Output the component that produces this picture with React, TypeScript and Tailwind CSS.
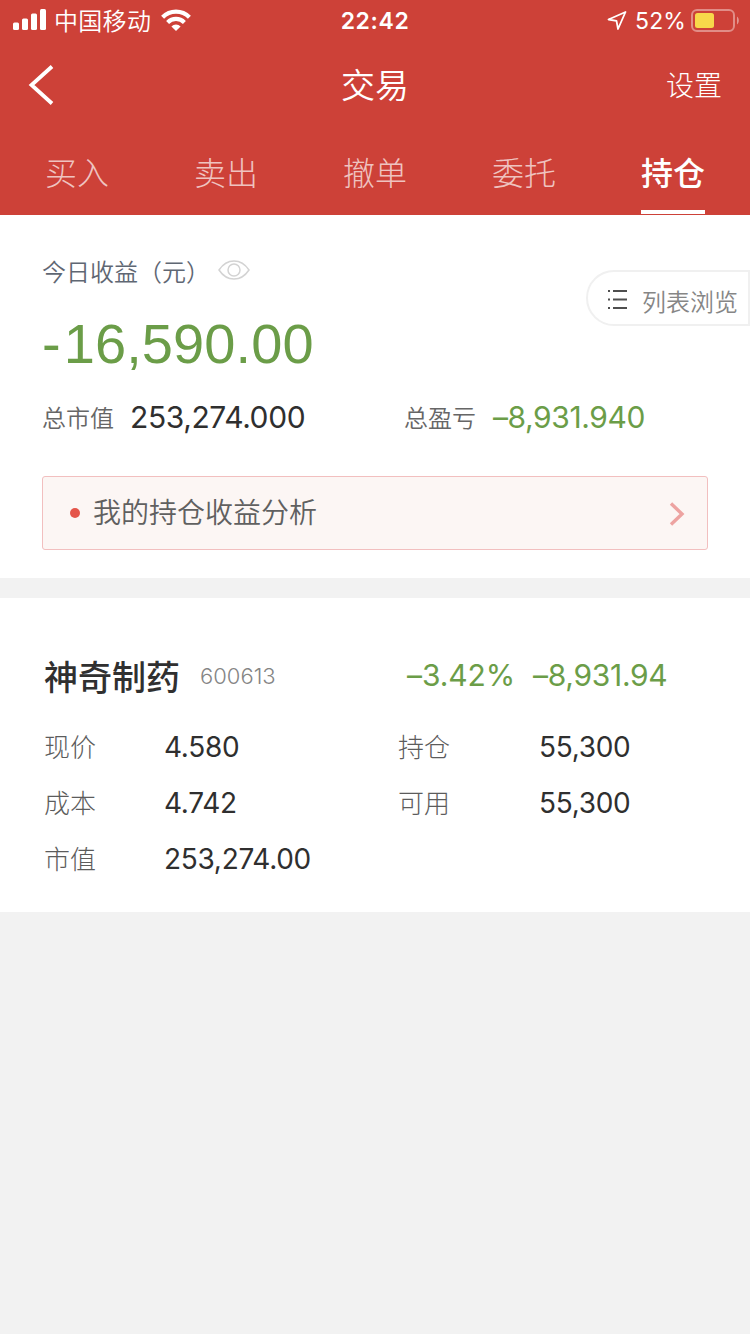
import React from 'react';
import clsx from 'clsx';

const tabs = ['买入', '卖出', '撤单', '委托', '持仓'];
const activeTab = '持仓';

const position = {
    name: '神奇制药',
    code: '600613',
    rate: '–3.42%',
    profit: '–8,931.94',
    rows: [
        ['现价', '4.580', '持仓', '55,300'],
        ['成本', '4.742', '可用', '55,300'],
        ['市值', '253,274.00', '', ''],
    ],
};

const StatusBar: React.FC = () => (
    <div className="h-10 grid grid-cols-3 items-center text-white leading-none">
        <div className="flex items-center pl-[13px]">
            <svg className="w-[33px] h-[22px]" viewBox="0 0 33 22" fill="currentColor">
                <rect x="0" y="13.5" width="6" height="7.5" rx="1.5" />
                <rect x="9" y="9.5" width="6" height="11.5" rx="1.5" />
                <rect x="18" y="4.5" width="6" height="16.5" rx="1.5" />
                <rect x="27" y="0" width="6" height="21" rx="1.5" />
            </svg>
            <span className="ml-2 pt-[3px] text-[24px] font-[350] tracking-[0.3px]">中国移动</span>
            <svg className="ml-[10px] w-[30px] h-[22px]" viewBox="0 0 30 22" fill="none" stroke="currentColor" strokeWidth="4.2">
                <path d="M1.6 8.2a19 19 0 0 1 26.8 0" />
                <path d="M6.6 13.4a12 12 0 0 1 16.8 0" />
                <path d="M10.4 17.4a6.6 6.6 0 0 1 9.2 0L15 22z" fill="currentColor" stroke="none" />
            </svg>
        </div>
        <div className="pt-[2px] text-center text-[23px] font-semibold tracking-[0.6px]">22:42</div>
        <div className="flex items-center justify-end pr-[11px]">
            <svg className="w-5 h-5" viewBox="0 0 20 20" fill="none" stroke="currentColor" strokeWidth="1.8" strokeLinejoin="round">
                <path d="M18.5 2L1.5 9.5l8 1.3 1.5 8.200z" />
            </svg>
            <span className="ml-2 pt-[2px] text-[23px] tracking-[0.1px]">52%</span>
            <svg className="ml-[5px] w-[48px] h-[23px]" viewBox="0 0 48 23" fill="none">
                <rect x="1" y="1" width="42" height="21" rx="5" stroke="#fff" strokeOpacity=".4" strokeWidth="2" />
                <path d="M46 7.5c2.4 1.6 2.4 6.4 0 8z" fill="#fff" fillOpacity=".45" />
                <rect x="4" y="4" width="19" height="15" rx="2.5" fill="#f8d84a" />
            </svg>
        </div>
    </div>
);

const Header: React.FC = () => (
    <header className="h-[215px] bg-[#cd4138] flex flex-col text-white">
        <StatusBar />
        <div className="h-[90px] grid grid-cols-3 items-center px-7 leading-none">
            <svg className="w-[26px] h-[40px]" viewBox="0 0 26 40" fill="none" stroke="currentColor" strokeWidth="3.8">
                <path d="M24 1.500L3.500 20l20.500 18.500" />
            </svg>
            <h1 className="pt-[2px] text-center text-[34px] font-[350]">交易</h1>
            <span className="pt-[2px] text-right text-[28px] font-light">设置</span>
        </div>
        <nav className="flex-1 flex px-[2.5px]">
            {tabs.map((tab) => (
                <div key={tab} className="flex-1 flex flex-col items-center pb-px">
                    <span
                        className={clsx(
                            'flex-1 flex items-center pt-[7px] text-[32px] leading-none',
                            tab === activeTab ? 'font-medium' : 'font-light text-white/70'
                        )}
                    >
                        {tab}
                    </span>
                    <span className={clsx('w-16 h-1', tab === activeTab && 'bg-white')} />
                </div>
            ))}
        </nav>
    </header>
);

const Summary: React.FC = () => (
    <section className="relative bg-white pt-7 pb-7 px-[42px]">
        <div className="h-14 flex items-center">
            <span className="pt-[3px] text-[24px] leading-none font-[350] text-[#5f6773]">今日收益（元）</span>
            <svg className="mb-0.5 ml-2 w-8 h-5" viewBox="0 0 32 20" fill="none" stroke="#d3d3d3" strokeWidth="1.5">
                <path d="M1 10C9-2 23-2 31 10C23 22 9 22 1 10z" />
                <circle cx="16" cy="10" r="6" />
            </svg>
        </div>
        <div className="h-[90px] flex items-center text-[56px] leading-none text-[#6b9d48] font-['Liberation_Sans',sans-serif]">
            <span className="tracking-[3px]">-</span>
            <span className="tracking-[0.1px]">16,590.00</span>
        </div>
        <div className="h-[58px] flex items-center leading-none">
            <div className="w-[362px] flex items-center">
                <span className="pt-[2px] text-[24px] text-[#666] font-[350]">总市值</span>
                <span className="ml-4 pb-[2px] text-[30px] tracking-[-0.4px] text-[#2f2f2f]">253,274.000</span>
            </div>
            <span className="pt-[2px] text-[24px] text-[#666] font-[350]">总盈亏</span>
            <span className="ml-[17px] pb-[2px] text-[30px] tracking-[-0.4px] text-[#6b9d48]">–8,931.940</span>
        </div>
        <div className="mt-[29px] h-[74px] flex items-center border border-[#f2bfbf] rounded-[3px] bg-[#fcf6f4] pl-[27px] pr-[22px]">
            <span className="w-[10px] h-[10px] rounded-full bg-[#e4554a]" />
            <span className="ml-[13px] flex-1 text-[28px] leading-none font-[350] text-[#606060]">我的持仓收益分析</span>
            <svg className="mt-px w-4 h-6" viewBox="0 0 16 24" fill="none" stroke="#eda3a1" strokeWidth="3.4">
                <path d="M2 1.500L13 12L2 22.500" />
            </svg>
        </div>

        {/* Плавающая кнопка у правого края */}
        <button className="absolute right-0 top-[55px] w-[164px] h-14 flex items-center border-2 border-[#f0f0f0] rounded-l-full bg-white pt-1 pl-[19px]">
            <svg className="w-[22px] h-5" viewBox="0 0 22 20" fill="none" stroke="#4f4f4f" strokeWidth="2">
                <path d="M1 1h2M6 1h14M1 9.500h2M6 9.500h14M1 18h2M6 18h14" />
            </svg>
            <span className="ml-[13px] pt-[5px] text-[24px] leading-none font-[350] text-[#868686] whitespace-nowrap">列表浏览</span>
        </button>
    </section>
);

const PositionCard: React.FC = () => (
    <section className="mt-5 h-[314px] bg-white pt-12 pl-11">
        <div className="h-[60px] flex items-center leading-none">
            <div className="w-[363px] flex items-center">
                <span className="pt-[4px] text-[34px] font-medium text-[#303030]">{position.name}</span>
                <span className="ml-5 text-[22px] font-light text-[#858585]">{position.code}</span>
            </div>
            <span className="text-[30px] tracking-[-0.1px] pb-[2px] text-[#6b9d48]">{position.rate}</span>
            <span className="ml-[18px] text-[30px] tracking-[-0.3px] pb-[2px] text-[#6b9d48]">{position.profit}</span>
        </div>
        <div className="mt-3">
            {position.rows.map(([label, value, label2, value2]) => (
                <div key={label} className="h-14 flex items-center leading-none">
                    <span className="w-[120px] pt-1 text-[26px] font-light text-[#5c5c5c]">{label}</span>
                    <span className="w-[234px] pt-px text-[28px] tracking-[-0.3px] text-[#2f2f2f]">{value}</span>
                    <span className="w-[141px] pt-1 text-[26px] font-light text-[#5c5c5c]">{label2}</span>
                    <span className="pt-px text-[28px] tracking-[-0.3px] text-[#2f2f2f]">{value2}</span>
                </div>
            ))}
        </div>
    </section>
);

const App: React.FC = () => {
    return (
        <div className="w-[750px] h-[1334px] bg-[#f2f2f2] overflow-hidden font-['Inter','Noto_Sans_CJK_SC',sans-serif]">
            <Header />
            <Summary />
            <PositionCard />
        </div>
    );
};

export default App;
